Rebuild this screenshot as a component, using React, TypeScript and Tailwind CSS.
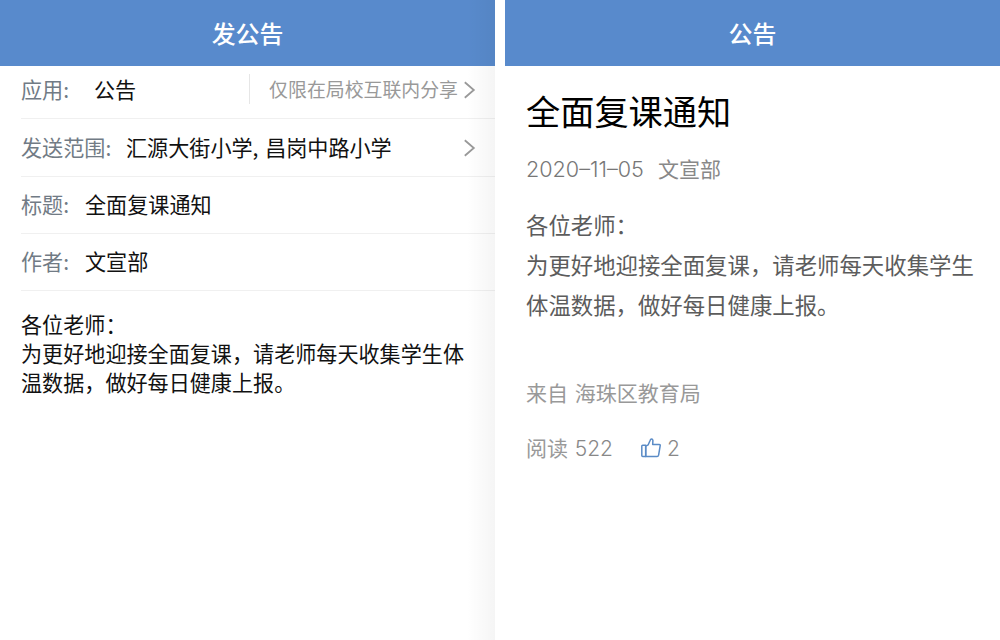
import type { ReactNode } from 'react';

const rows = [
    { label: '标题:', value: '全面复课通知' },
    { label: '作者:', value: '文宣部' },
];

function Chevron() {
    return (
        <svg width="12" height="18" viewBox="0 0 12 18" fill="none" stroke="#999" strokeWidth="1.8" className="shrink-0">
            <path d="M0.8 1.2 L9.8 9 L0.8 16.8" />
        </svg>
    );
}

function ThumbUp() {
    return (
        <svg width="20" height="20" viewBox="0 0 20 20" fill="none" stroke="#5a8bc6" strokeWidth="1.5" strokeLinejoin="round" className="shrink-0">
            <path d="M4.7 8.2 L7.2 6.8 L9.2 2.2 C9.7 0.6 11.6 0.8 11.9 2.4 L11.7 6.4 L18.2 6.4 C19 6.4 19.3 6.9 19.2 7.6 L17.6 17.2 C17.4 18.1 17 18.5 16.1 18.5 L4.7 18.5 Z" />
            <path d="M4.7 7.2 L1.7 7.2 C1.1 7.2 0.8 7.5 0.8 8.1 L0.8 17.6 C0.8 18.2 1.1 18.5 1.7 18.5 L4.7 18.5 Z" />
        </svg>
    );
}

function Header({ children }: { children: ReactNode }) {
    return (
        <header className="flex h-[66px] shrink-0 items-center justify-center bg-[#588acc] text-[23.9px] leading-[66px] font-medium text-white">
            {children}
        </header>
    );
}

function PublishNotice() {
    return (
        <section className="relative flex w-[495px] flex-col overflow-hidden bg-white text-[21.1px] whitespace-nowrap text-[#111]">
            <Header>发公告</Header>

            <div className="flex flex-col pl-[21px]">
                <div className="flex h-[53px] items-start border-b border-[#f0f0f0] pr-[19px]">
                    <div className="flex h-[47px] flex-1 items-center">
                        <span className="w-[73px] text-[#717b85]">应用:</span>
                        <span>公告</span>
                    </div>
                    <div className="mt-2 h-[30px] w-px bg-[#e6e6e6]" />
                    <div className="flex h-[47px] items-center gap-[6px] pl-[19px] text-[18.9px] text-[#999]">
                        <span>仅限在局校互联内分享</span>
                        <Chevron />
                    </div>
                </div>
                <div className="flex h-[58px] items-center border-b border-[#f0f0f0] pr-[19px]">
                    <span className="w-[105px] text-[#717b85]">发送范围:</span>
                    <span className="flex-1 [word-spacing:2px]">汇源大街小学, 昌岗中路小学</span>
                    <Chevron />
                </div>
                {rows.map((row) => (
                    <div key={row.label} className="flex h-[57px] items-center border-b border-[#f0f0f0]">
                        <span className="w-[64px] text-[#717b85]">{row.label}</span>
                        <span>{row.value}</span>
                    </div>
                ))}
            </div>

            <div className="pt-[19px] pl-[21px] leading-[29px]">
                <p>各位老师：</p>
                <p>为更好地迎接全面复课，请老师每天收集学生体</p>
                <p>温数据，做好每日健康上报。</p>
            </div>

            {/* sombra del borde derecho */}
            <div className="absolute inset-y-0 right-0 w-7 bg-gradient-to-r from-black/0 to-black/4" />
        </section>
    );
}

function NoticeDetail() {
    return (
        <section className="flex w-[495px] flex-col bg-white whitespace-nowrap">
            <Header>公告</Header>

            <article className="flex flex-col pl-[21px]">
                <h1 className="mt-[19px] text-[34.2px] leading-[50px] text-black">全面复课通知</h1>
                <div className="mt-[17px] flex gap-[15px] text-[21px] leading-[32px] text-[#888]">
                    <span className="w-[117px] pt-px font-['Inter','Noto_Sans_CJK_SC',sans-serif] text-[21.6px] font-light text-[#777]">2020–11–05</span>
                    <span>文宣部</span>
                </div>
                <div className="mt-[19px] text-[22.4px] leading-10 text-[#5c5c5c]">
                    <p>各位老师：</p>
                    <p>为更好地迎接全面复课，请老师每天收集学生</p>
                    <p>体温数据，做好每日健康上报。</p>
                </div>
                <p className="mt-[52px] text-[21px] leading-[32px] text-[#999] [word-spacing:2px]">来自 海珠区教育局</p>
                <div className="mt-[23px] flex items-center text-[21px] leading-[32px] text-[#999]">
                    <span className="w-[115px] [word-spacing:2px]">
                        阅读 <span className="font-['Inter',sans-serif] font-light text-[#888]">522</span>
                    </span>
                    <ThumbUp />
                    <span className="ml-[6px] pt-px font-['Inter',sans-serif] font-light text-[#888]">2</span>
                </div>
            </article>
        </section>
    );
}

export default function App() {
    return (
        <div className="flex h-[640px] w-[1000px] gap-[10px] overflow-hidden bg-white font-['Noto_Sans_CJK_SC',sans-serif]">
            <PublishNotice />
            <NoticeDetail />
        </div>
    );
}
